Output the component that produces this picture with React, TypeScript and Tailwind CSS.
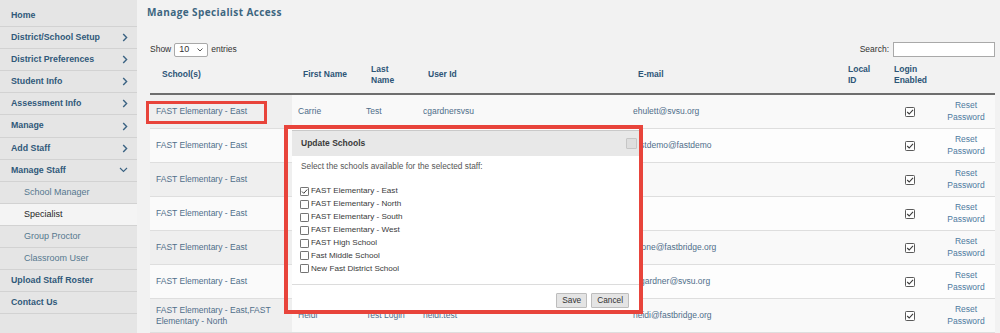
import React from "react";

type NavItem = { label: string; chev?: "right" | "down"; sub?: boolean; active?: boolean };

const NAV: NavItem[] = [
  { label: "Home" },
  { label: "District/School Setup", chev: "right" },
  { label: "District Preferences", chev: "right" },
  { label: "Student Info", chev: "right" },
  { label: "Assessment Info", chev: "right" },
  { label: "Manage", chev: "right" },
  { label: "Add Staff", chev: "right" },
  { label: "Manage Staff", chev: "down" },
  { label: "School Manager", sub: true },
  { label: "Specialist", sub: true, active: true },
  { label: "Group Proctor", sub: true },
  { label: "Classroom User", sub: true },
  { label: "Upload Staff Roster" },
  { label: "Contact Us" },
];

// rows 2-6 sit under the dialog, only the tail of the e-mail shows
const ROWS = [
  { school: ["FAST Elementary - East"], first: "Carrie", last: "Test", user: "cgardnersvsu", email: "ehulett@svsu.org" },
  { school: ["FAST Elementary - East"], first: "", last: "", user: "", email: "fastdemo@fastdemo" },
  { school: ["FAST Elementary - East"], first: "", last: "", user: "", email: "" },
  { school: ["FAST Elementary - East"], first: "", last: "", user: "", email: "" },
  { school: ["FAST Elementary - East"], first: "", last: "", user: "", email: "jstone@fastbridge.org" },
  { school: ["FAST Elementary - East"], first: "", last: "", user: "", email: "mgardner@svsu.org" },
  { school: ["FAST Elementary - East,FAST", "Elementary - North"], first: "Heidi", last: "Test Login", user: "heidi.test", email: "heidi@fastbridge.org" },
];

const SCHOOLS = [
  "FAST Elementary - East",
  "FAST Elementary - North",
  "FAST Elementary - South",
  "FAST Elementary - West",
  "FAST High School",
  "Fast Middle School",
  "New Fast District School",
];

function ChevronRight() {
  return (
    <svg width="6" height="9" viewBox="0 0 6 9" className="shrink-0">
      <path d="M1.2 1l3.4 3.5L1.2 8" fill="none" stroke="#3b6383" strokeWidth="1.4" />
    </svg>
  );
}

function ChevronDown() {
  return (
    <svg width="9" height="6" viewBox="0 0 9 6" className="shrink-0">
      <path d="M1 1l3.5 3.5L8 1" fill="none" stroke="#3b6383" strokeWidth="1.1" />
    </svg>
  );
}

function Check({ checked = true, size = 10 }: { checked?: boolean; size?: number }) {
  return (
    <svg width={size} height={size} viewBox="0 0 10 10" className="shrink-0">
      <rect x="0.5" y="0.5" width="9" height="9" rx="0.8" fill="#fff" stroke="#5a5a5a" strokeWidth="1" />
      {checked && <path d="M2.2 5l2 2 3.8-4.2" fill="none" stroke="#3a3a3a" strokeWidth="1.1" />}
    </svg>
  );
}

function Sidebar() {
  return (
    <div className="w-[137px] h-full shrink-0 bg-[#e5e5e5] pt-[5px]">
      {NAV.map((n) => (
        <div
          key={n.label}
          className={
            "h-[22.1px] flex items-center justify-between border-b border-[#d2d2d2] pr-[9px] " +
            (n.sub ? "pl-[24px] text-[9px] " : "pl-[11px] text-[8.8px] font-bold text-[#30597a] ") +
            (n.sub && !n.active ? "text-[#55788f] " : "") +
            (n.active ? "bg-[#f4f4f4] text-[#262626] " : "")
          }
        >
          <span>{n.label}</span>
          {n.chev === "right" && <ChevronRight />}
          {n.chev === "down" && <ChevronDown />}
        </div>
      ))}
    </div>
  );
}

const GRID = "grid grid-cols-[142px_68px_57px_210px_210px_46px_54px_58px]";

function Table() {
  return (
    <div className="ml-[13px] mr-[5px]">
      <div className={GRID + " h-[35.5px] pb-[2px] items-center text-[8.5px] font-bold text-[#2d5577] leading-[11.6px] border-b-2 border-[#6e6e6e]"}>
        <div className="pl-[12px]">School(s)</div>
        <div className="pl-[11px]">First Name</div>
        <div className="pl-[11px]">Last<br />Name</div>
        <div className="pl-[11px]">User Id</div>
        <div className="pl-[11px]">E-mail</div>
        <div className="pl-[11px]">Local<br />ID</div>
        <div className="pl-[11px]">Login<br />Enabled</div>
        <div />
      </div>
      {ROWS.map((r, i) => (
        <div
          key={i}
          className={
            GRID +
            " min-h-[34px] border-b border-[#dedede] text-[8.5px] text-[#4f6e8a] " +
            (i % 2 === 0 ? "bg-[#f9f9f9]" : "bg-[#fdfdfd]")
          }
        >
          <div className={"pl-[6px] flex flex-col justify-center leading-[10.6px] " + (i % 2 === 0 ? "bg-[#efefef]" : "bg-[#fafafa]")}>
            {r.school.map((s) => (
              <span key={s}>{s}</span>
            ))}
          </div>
          <div className="pl-[6px] flex items-center">{r.first}</div>
          <div className="pl-[6px] flex items-center">{r.last}</div>
          <div className="pl-[6px] flex items-center">{r.user}</div>
          <div className="pl-[6px] flex items-center">{r.email}</div>
          <div />
          <div className="flex items-center justify-center">
            <Check />
          </div>
          <div className="flex flex-col items-center justify-center leading-[11.6px] text-[#4d7aa0]">
            <span>Reset</span>
            <span>Password</span>
          </div>
        </div>
      ))}
    </div>
  );
}

function Modal() {
  return (
    <div className="absolute left-[292px] top-[130px] w-[349px] h-[184px] bg-white border-t border-[#c9c9c9] flex flex-col">
      <div className="h-[25px] shrink-0 bg-[#e8e8e8] flex items-center justify-between pl-[9px] pr-[4px]">
        <span className="text-[8.5px] font-bold text-[#3a3a3a]">Update Schools</span>
        <span className="w-[11px] h-[11px] rounded-[1px] bg-[#dedede] border border-[#c6c6c6]" />
      </div>
      <div className="pl-[9px] pt-[5px] text-[8.3px] leading-[11px] text-[#555]">
        Select the schools available for the selected staff:
      </div>
      <div className="pl-[8px] mt-[13px] flex flex-col">
        {SCHOOLS.map((s, i) => (
          <div key={s} className="h-[12.9px] flex items-center gap-[2px] text-[8.1px] text-[#3a3a3a]">
            <Check checked={i === 0} size={9} />
            <span>{s}</span>
          </div>
        ))}
      </div>
      <div className="mt-[9px] border-t border-[#dcdcdc] pt-[8px] pr-[12px] flex justify-end gap-[4px]">
        <button className="h-[14.5px] px-[5px] bg-[#e4e4e4] border border-[#bdbdbd] rounded-[1px] text-[8.3px] text-[#333] leading-none">
          Save
        </button>
        <button className="h-[14.5px] px-[5px] bg-[#e4e4e4] border border-[#bdbdbd] rounded-[1px] text-[8.3px] text-[#333] leading-none">
          Cancel
        </button>
      </div>
    </div>
  );
}

export default function App() {
  return (
    <div className="relative w-[1000px] h-[333px] overflow-hidden flex bg-[#f2f2f2] font-['Liberation_Sans',Arial,sans-serif]">
      <Sidebar />
      <div className="flex-1 min-w-0 flex flex-col">
        <div className="h-[26px] flex items-center pl-[10px] font-['Open_Sans',sans-serif] text-[10px] font-bold tracking-[0.4px] text-[#3d6680]">
          Manage Specialist Access
        </div>
        <div className="mt-[15px] h-[20px] ml-[13px] mr-[5px] flex items-center justify-between text-[8.5px] text-[#333]">
          <div className="flex items-center gap-[3px]">
            <span>Show</span>
            <div className="w-[34px] h-[14px] bg-white border border-[#a9a9a9] rounded-[2px] flex items-center justify-between pl-[4px] pr-[4px]">
              <span className="text-[9px]">10</span>
              <svg width="6" height="4" viewBox="0 0 6 4">
                <path d="M0.5 0.5l2.5 2.5 2.5-2.5" fill="none" stroke="#444" strokeWidth="0.9" />
              </svg>
            </div>
            <span>entries</span>
          </div>
          <div className="flex items-center gap-[4px]">
            <span>Search:</span>
            <div className="w-[102px] h-[15px] bg-white border border-[#a9a9a9]" />
          </div>
        </div>
        <Table />
      </div>
      <Modal />
      <div className="absolute left-[146px] top-[101px] w-[121px] h-[23px] border-[3px] border-[#e8443b]" />
      <div className="absolute left-[284px] top-[125px] w-[359px] h-[189px] border-4 border-[#e8443b]" />
    </div>
  );
}
